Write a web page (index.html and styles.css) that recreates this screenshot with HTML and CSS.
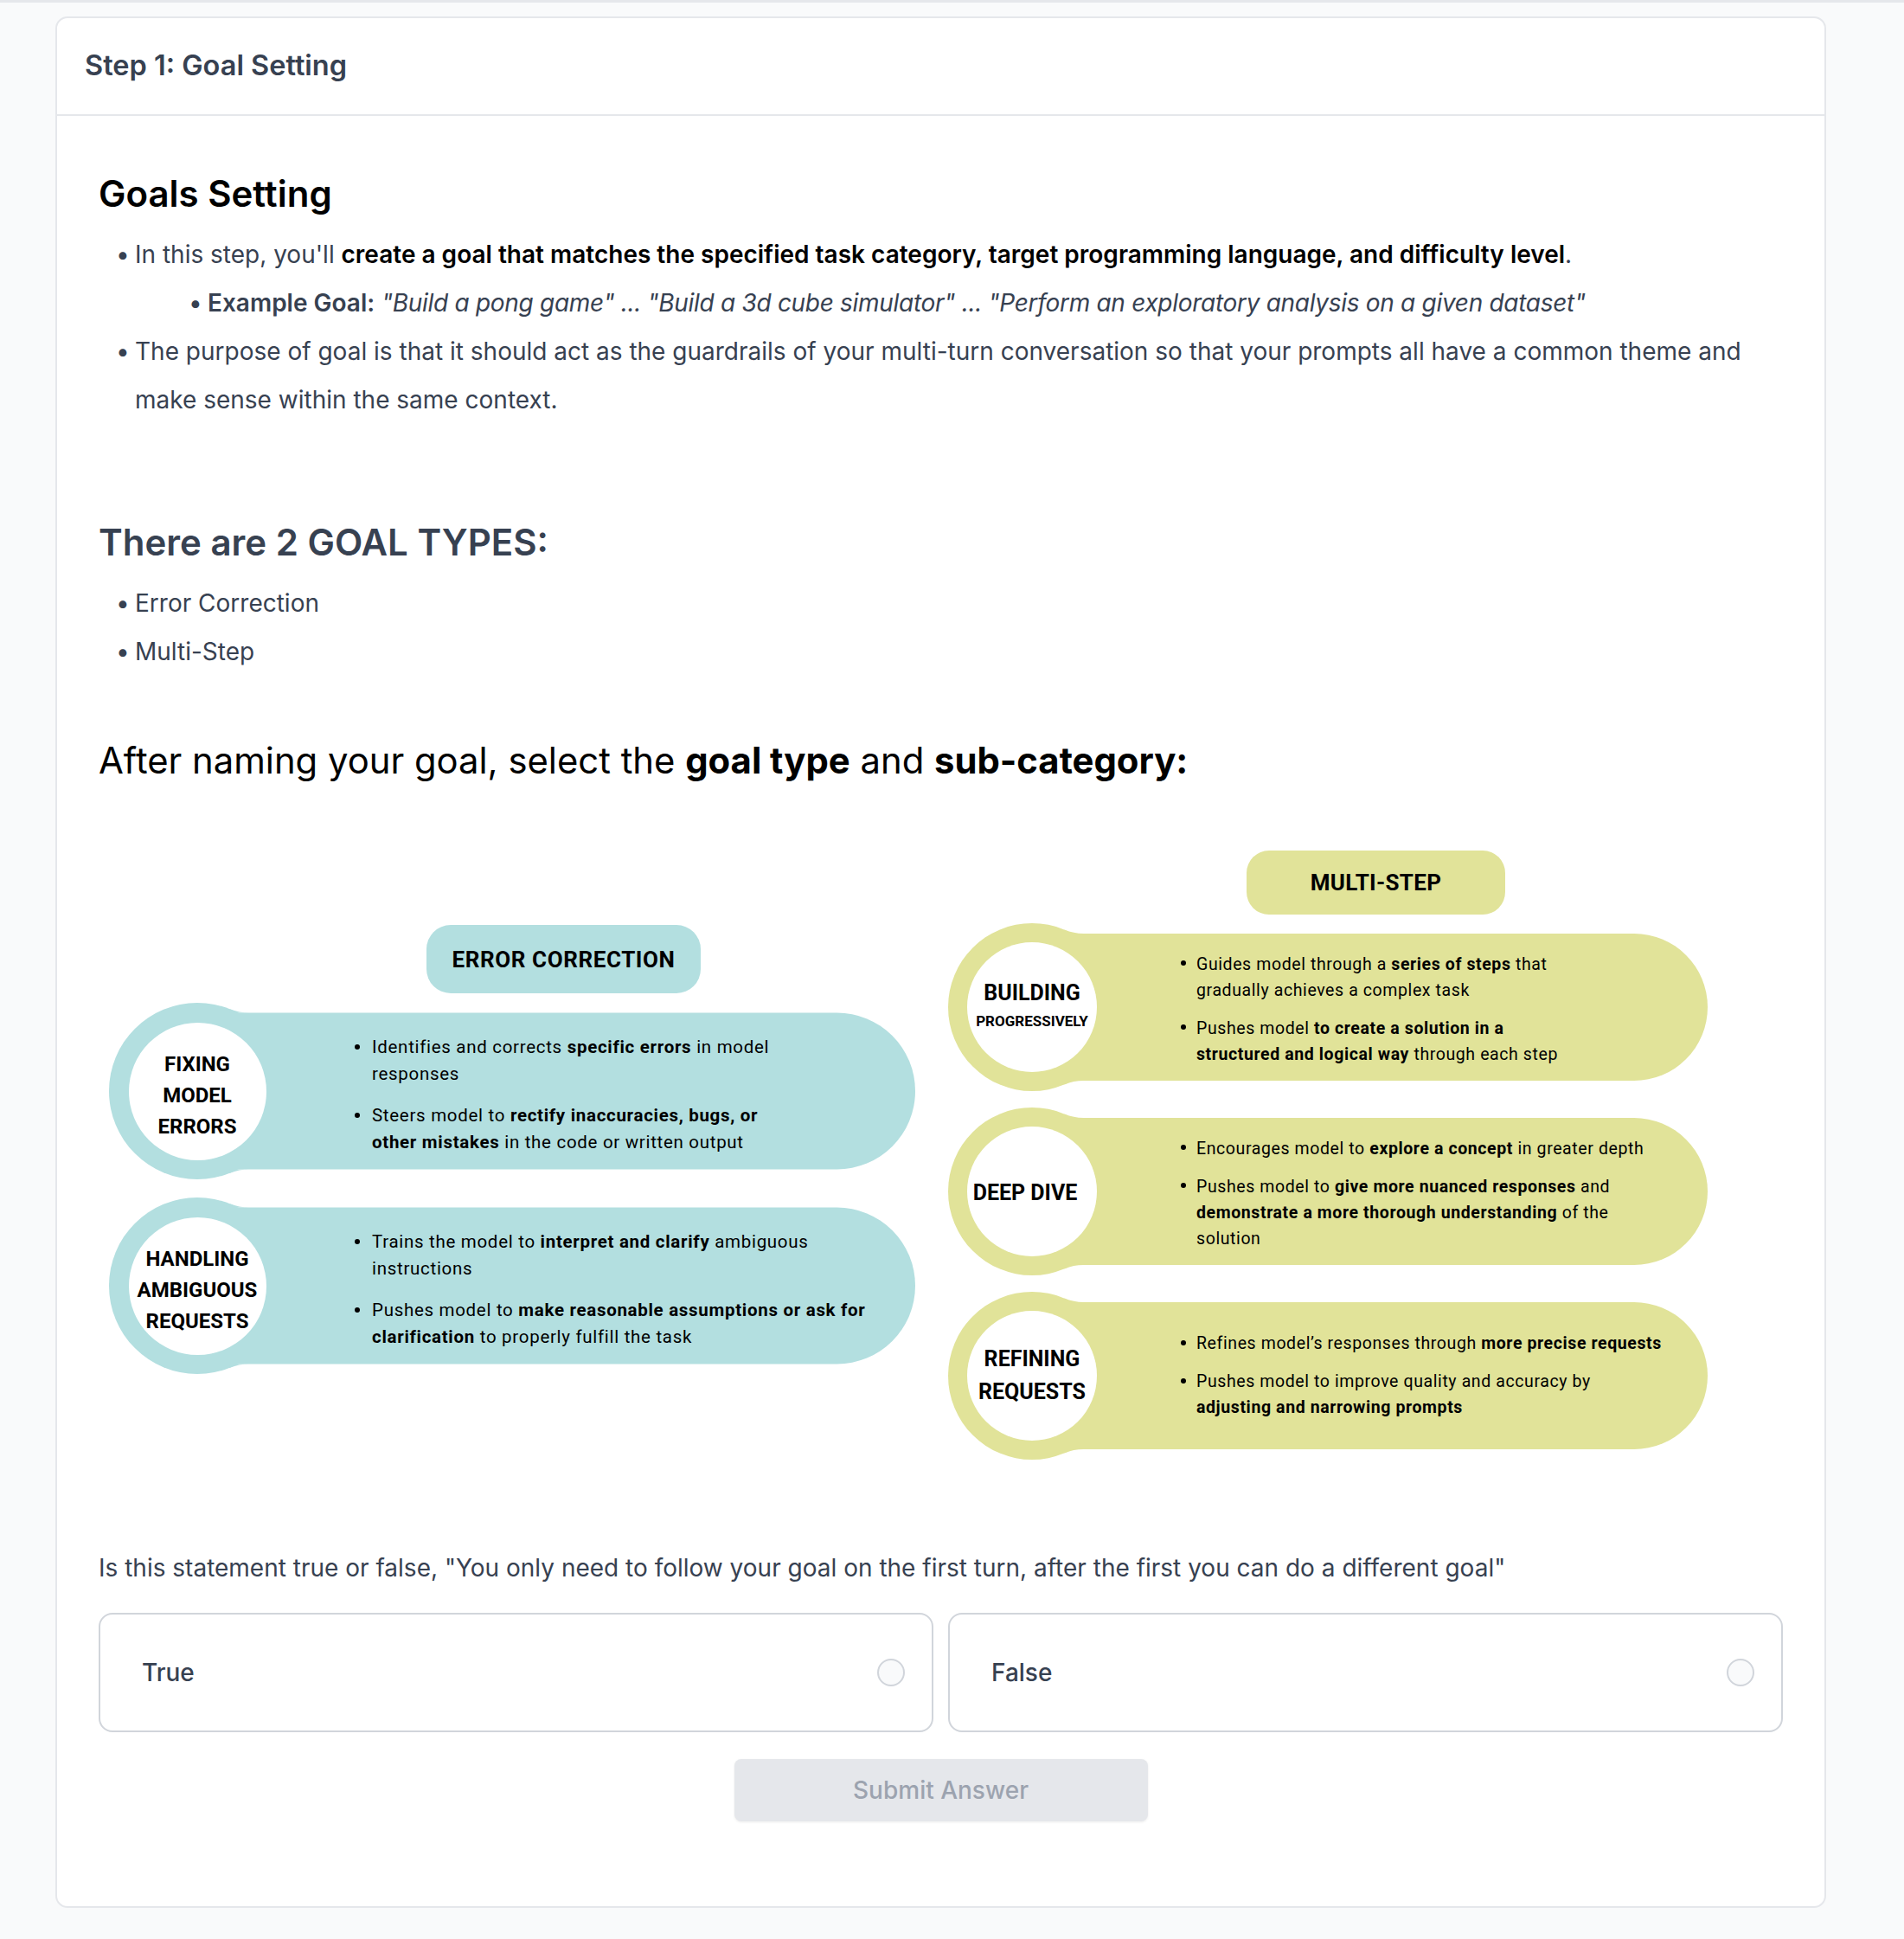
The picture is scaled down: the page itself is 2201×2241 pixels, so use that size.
FILE: index.html
```html
<!DOCTYPE html>
<html lang="en">
<head>
<meta charset="utf-8">
<title>Step 1: Goal Setting</title>
<link rel="stylesheet" href="styles.css">
</head>
<body>
<div class="topbar"></div>
<main class="page">
  <section class="card">
    <header class="card-head">
      <h1 class="card-title">Step 1: Goal Setting</h1>
    </header>
    <div class="card-body">
      <h2 class="h-goals">Goals Setting</h2>
      <ul class="bullets">
        <li>In this step, you'll <strong class="dark">create a goal that matches the specified task category, target programming language, and difficulty level</strong>.
          <ul class="bullets sub">
            <li><strong>Example Goal:</strong> <em>"Build a pong game" ... "Build a 3d cube simulator" ... "Perform an exploratory analysis on a given dataset"</em></li>
          </ul>
        </li>
        <li>The purpose of goal is that it should act as the guardrails of your multi-turn conversation so that your prompts all have a common theme and make sense within the same context.</li>
      </ul>

      <h2 class="h-types">There are 2 GOAL TYPES:</h2>
      <ul class="bullets">
        <li>Error Correction</li>
        <li>Multi-Step</li>
      </ul>

      <h3 class="h-after">After naming your goal, select the <strong>goal type</strong> and <strong>sub-category:</strong></h3>

      <div class="diagram">
        <div class="dcol dcol-left teal">
          <div class="pill pill-left">ERROR CORRECTION</div>

          <div class="drow drow-left">
            <svg class="drow-bg" width="932" height="204" viewBox="0 0 932 204" aria-hidden="true">
              <circle cx="102" cy="102" r="102"/>
              <path d="M102 11.5 H841.5 A90.5 90.5 0 0 1 841.5 192.5 H102 Z"/>
              <path d="M139.7 7.24 A60 60 0 0 0 161.9 11.5 L139.7 11.5 Z"/>
              <path d="M139.7 196.76 A60 60 0 0 1 161.9 192.5 L139.7 192.5 Z"/>
            </svg>
            <div class="disc disc-left"><span class="lbl lbl-left">FIXING<br>MODEL<br>ERRORS</span></div>
            <ul class="dlist dlist-left">
              <li>Identifies and corrects <b>specific errors</b> in model<br>responses</li>
              <li>Steers model to <b>rectify inaccuracies, bugs, or<br>other mistakes</b> in the code or written output</li>
            </ul>
          </div>

          <div class="drow drow-left drow-next-left">
            <svg class="drow-bg" width="932" height="204" viewBox="0 0 932 204" aria-hidden="true">
              <circle cx="102" cy="102" r="102"/>
              <path d="M102 11.5 H841.5 A90.5 90.5 0 0 1 841.5 192.5 H102 Z"/>
              <path d="M139.7 7.24 A60 60 0 0 0 161.9 11.5 L139.7 11.5 Z"/>
              <path d="M139.7 196.76 A60 60 0 0 1 161.9 192.5 L139.7 192.5 Z"/>
            </svg>
            <div class="disc disc-left"><span class="lbl lbl-left">HANDLING<br>AMBIGUOUS<br>REQUESTS</span></div>
            <ul class="dlist dlist-left">
              <li>Trains the model to <b>interpret and clarify</b> ambiguous<br>instructions</li>
              <li>Pushes model to <b>make reasonable assumptions or ask for<br>clarification</b> to properly fulfill the task</li>
            </ul>
          </div>
        </div>

        <div class="dcol dcol-right lime">
          <div class="pill pill-right">MULTI-STEP</div>

          <div class="drow drow-right">
            <svg class="drow-bg" width="878" height="194" viewBox="0 0 878 194" aria-hidden="true">
              <circle cx="97" cy="97" r="97"/>
              <path d="M97 12 H793 A85 85 0 0 1 793 182 H97 Z"/>
              <path d="M134.5 7.56 A57 57 0 0 0 156.6 12 L134.5 12 Z"/>
              <path d="M134.5 186.44 A57 57 0 0 1 156.6 182 L134.5 182 Z"/>
            </svg>
            <div class="disc disc-right"><span class="lbl lbl-build">BUILDING<br><span class="lbl-small">PROGRESSIVELY</span></span></div>
            <ul class="dlist dlist-right">
              <li>Guides model through a <b>series of steps</b> that<br>gradually achieves a complex task</li>
              <li>Pushes model <b>to create a solution in a<br>structured and logical way</b> through each step</li>
            </ul>
          </div>

          <div class="drow drow-right drow-next-right">
            <svg class="drow-bg" width="878" height="194" viewBox="0 0 878 194" aria-hidden="true">
              <circle cx="97" cy="97" r="97"/>
              <path d="M97 12 H793 A85 85 0 0 1 793 182 H97 Z"/>
              <path d="M134.5 7.56 A57 57 0 0 0 156.6 12 L134.5 12 Z"/>
              <path d="M134.5 186.44 A57 57 0 0 1 156.6 182 L134.5 182 Z"/>
            </svg>
            <div class="disc disc-right"><span class="lbl lbl-big lbl-dive">DEEP DIVE</span></div>
            <ul class="dlist dlist-right">
              <li>Encourages model to <b>explore a concept</b> in greater depth</li>
              <li>Pushes model to <b>give more nuanced responses</b> and<br><b>demonstrate a more thorough understanding</b> of the<br>solution</li>
            </ul>
          </div>

          <div class="drow drow-right drow-next-right">
            <svg class="drow-bg" width="878" height="194" viewBox="0 0 878 194" aria-hidden="true">
              <circle cx="97" cy="97" r="97"/>
              <path d="M97 12 H793 A85 85 0 0 1 793 182 H97 Z"/>
              <path d="M134.5 7.56 A57 57 0 0 0 156.6 12 L134.5 12 Z"/>
              <path d="M134.5 186.44 A57 57 0 0 1 156.6 182 L134.5 182 Z"/>
            </svg>
            <div class="disc disc-right"><span class="lbl lbl-big">REFINING<br>REQUESTS</span></div>
            <ul class="dlist dlist-right dlist-refine">
              <li>Refines model’s responses through <b>more precise requests</b></li>
              <li>Pushes model to improve quality and accuracy by<br><b>adjusting and narrowing prompts</b></li>
            </ul>
          </div>
        </div>
      </div>

      <p class="question">Is this statement true or false, "You only need to follow your goal on the first turn, after the first you can do a different goal"</p>

      <div class="options">
        <label class="option"><span class="option-text">True</span><span class="radio"></span></label>
        <label class="option"><span class="option-text">False</span><span class="radio"></span></label>
      </div>

      <div class="submit-row">
        <button class="submit" type="button" disabled>Submit Answer</button>
      </div>
    </div>
  </section>
</main>
</body>
</html>
```

FILE: styles.css
```css
* { box-sizing: border-box; }

html, body {
  margin: 0;
  padding: 0;
  background: #f9fafb;
}

body {
  font-family: Inter, "Noto Sans", "Liberation Sans", sans-serif;
  color: #374151;
}

.topbar {
  height: 3px;
  background: #e5e7eb;
}

.page {
  padding: 16px 0 36px 64px;
}

.card {
  width: 2047px;
  background: #ffffff;
  border: 2px solid #e5e7eb;
  border-radius: 14px;
}

.card-head {
  padding: 34px 32px 35px;
  border-bottom: 2px solid #e5e7eb;
}

.card-title {
  margin: 0;
  font-size: 32.5px;
  line-height: 42px;
  font-weight: 600;
  color: #374151;
}

.card-body {
  padding: 62px 48px 98px;
}

.h-goals,
.h-types,
.h-after {
  margin: 0;
  font-size: 42px;
  line-height: 56px;
}

.h-goals {
  font-weight: 600;
  color: #000;
}

.h-types {
  margin-top: 109px;
  font-weight: 600;
  color: #374151;
}

.h-after {
  margin-top: 70px;
  font-size: 41.8px;
  font-weight: 400;
  color: #000;
}

.h-after strong { font-weight: 700; }

.bullets {
  list-style: none;
  margin: 14px 0 0;
  padding: 0 0 0 42px;
  font-size: 28px;
  line-height: 56px;
}

.bullets li::before {
  content: "•";
  display: inline-block;
  width: 22px;
  margin-left: -22px;
}

.bullets.sub {
  margin: 0;
  padding-left: 84px;
}

.bullets strong { font-weight: 600; }
.bullets strong.dark { color: #000; }
.bullets em { font-style: italic; letter-spacing: -0.3px; }

/* Diagram */
.diagram {
  margin: 76px 0 0 12px;
  display: flex;
  gap: 38px;
  align-items: flex-start;
  font-family: Roboto, "Liberation Sans", sans-serif;
  color: #000;
}

.dcol {
  display: flex;
  flex-direction: column;
}

.dcol-left { width: 932px; padding-top: 86px; }
.dcol-right { width: 878px; }

.teal { --fill: #b3dfe0; }
.lime { --fill: #e1e399; }

.pill {
  background: var(--fill);
  display: flex;
  align-items: center;
  justify-content: center;
  font-weight: 700;
  font-size: 26px;
  letter-spacing: 0.6px;
}

.pill-left {
  margin-left: 367px;
  width: 317px;
  height: 79px;
  border-radius: 28px;
}

.pill-right {
  margin-left: 345px;
  width: 299px;
  height: 74px;
  border-radius: 26px;
  letter-spacing: 0.3px;
}

.drow {
  position: relative;
  display: flex;
  align-items: center;
}

.drow-left { height: 204px; margin-top: 11px; }
.drow-next-left { margin-top: 21px; }
.drow-right { height: 194px; margin-top: 10px; }
.drow-next-right { margin-top: 19px; }

.drow-bg {
  position: absolute;
  left: 0;
  top: 0;
  fill: var(--fill);
}

.disc {
  position: relative;
  flex: none;
  border-radius: 50%;
  background: #fff;
  display: flex;
  align-items: center;
  justify-content: center;
  text-align: center;
}

.disc-left {
  width: 159px;
  height: 159px;
  margin-left: 22.5px;
}

.disc-right {
  width: 150px;
  height: 150px;
  margin-left: 22px;
}

.lbl {
  font-weight: 700;
  font-size: 24px;
  line-height: 36px;
  white-space: nowrap;
}

.lbl-left {
  margin-top: 9px;
}

.lbl-build {
  font-size: 25px;
  line-height: 30px;
  margin-top: -2px;
}

.lbl-small {
  display: inline-block;
  font-size: 17px;
  line-height: 24px;
}

.lbl-big {
  font-size: 25px;
  line-height: 38px;
}

.lbl-dive {
  margin-left: -16px;
  margin-top: 3px;
}

.dlist {
  position: relative;
  list-style: none;
  margin: 0;
  white-space: nowrap;
}

.dlist li::before {
  content: "";
  display: inline-block;
  width: 6px;
  height: 6px;
  border-radius: 50%;
  background: #000;
  vertical-align: middle;
  position: relative;
  top: -2px;
}

.dlist-left {
  margin-left: 102.5px;
  padding-left: 20px;
  font-size: 20.5px;
  letter-spacing: 0.7px;
  line-height: 31px;
  margin-top: 9px;
}

.dlist-left li::before { margin-left: -20px; margin-right: 14px; }
.dlist-left li + li { margin-top: 17px; }

.dlist-right {
  margin-left: 97px;
  padding-left: 18px;
  font-size: 19.5px;
  letter-spacing: 0.6px;
  line-height: 30px;
  margin-top: 5px;
}

.dlist-right li::before { margin-left: -18px; margin-right: 12px; }
.dlist-right li + li { margin-top: 14px; }

.dlist-refine { margin-top: 0; }

.dlist b { font-weight: 700; }

/* Question */
.question {
  margin: 104px 0 0;
  font-size: 28px;
  line-height: 42px;
  color: #374151;
}

.options {
  margin-top: 31px;
  display: grid;
  grid-template-columns: 1fr 1fr;
  gap: 17px;
}

.option {
  height: 138px;
  border: 2px solid #d1d5db;
  border-radius: 16px;
  display: flex;
  align-items: center;
  justify-content: space-between;
  padding: 0 31px 0 48px;
  background: #fff;
}

.option-text {
  font-size: 28px;
  font-weight: 500;
  color: #374151;
}

.radio {
  width: 32px;
  height: 32px;
  border-radius: 50%;
  border: 2px solid #d1d5db;
  background: #f9fafb;
}

.submit-row {
  margin-top: 31px;
  display: flex;
  justify-content: center;
}

.submit {
  width: 478px;
  height: 72px;
  border: none;
  border-radius: 8px;
  background: #e5e7eb;
  color: #9ca3af;
  font-family: Inter, "Noto Sans", sans-serif;
  font-size: 28px;
  font-weight: 500;
  box-shadow: 0 1px 3px rgba(0, 0, 0, 0.08);
}
```
